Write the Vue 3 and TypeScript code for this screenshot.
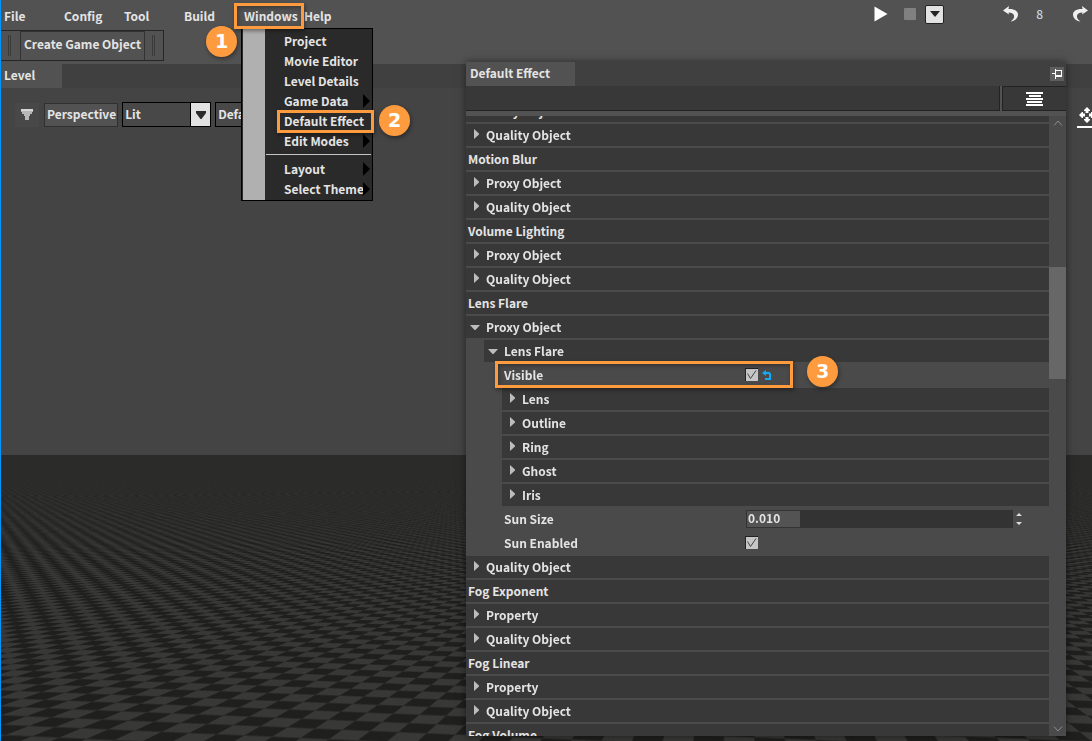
<script setup lang="ts">
import { onBeforeUnmount, onMounted, ref } from 'vue'

interface MenuEntry {
  label: string
  submenu?: boolean
  marked?: boolean
  separated?: boolean
}

interface TreeRow {
  label: string
  depth: number
  kind: 'title' | 'closed' | 'open' | 'check' | 'number'
  marked?: boolean
}

const menus: string[] = ['File', 'Config', 'Tool', 'Build', 'Windows', 'Help']

const windowsMenu: MenuEntry[] = [
  { label: 'Project' },
  { label: 'Movie Editor' },
  { label: 'Level Details' },
  { label: 'Game Data', submenu: true },
  { label: 'Default Effect', marked: true },
  { label: 'Edit Modes', submenu: true },
  { label: 'Layout', submenu: true, separated: true },
  { label: 'Select Theme', submenu: true },
]

const rows: TreeRow[] = [
  { label: 'Proxy Object', depth: 1, kind: 'closed' },
  { label: 'Quality Object', depth: 1, kind: 'closed' },
  { label: 'Motion Blur', depth: 0, kind: 'title' },
  { label: 'Proxy Object', depth: 1, kind: 'closed' },
  { label: 'Quality Object', depth: 1, kind: 'closed' },
  { label: 'Volume Lighting', depth: 0, kind: 'title' },
  { label: 'Proxy Object', depth: 1, kind: 'closed' },
  { label: 'Quality Object', depth: 1, kind: 'closed' },
  { label: 'Lens Flare', depth: 0, kind: 'title' },
  { label: 'Proxy Object', depth: 1, kind: 'open' },
  { label: 'Lens Flare', depth: 2, kind: 'open' },
  { label: 'Visible', depth: 3, kind: 'check', marked: true },
  { label: 'Lens', depth: 3, kind: 'closed' },
  { label: 'Outline', depth: 3, kind: 'closed' },
  { label: 'Ring', depth: 3, kind: 'closed' },
  { label: 'Ghost', depth: 3, kind: 'closed' },
  { label: 'Iris', depth: 3, kind: 'closed' },
  { label: 'Sun Size', depth: 3, kind: 'number' },
  { label: 'Sun Enabled', depth: 3, kind: 'check' },
  { label: 'Quality Object', depth: 1, kind: 'closed' },
  { label: 'Fog Exponent', depth: 0, kind: 'title' },
  { label: 'Property', depth: 1, kind: 'closed' },
  { label: 'Quality Object', depth: 1, kind: 'closed' },
  { label: 'Fog Linear', depth: 0, kind: 'title' },
  { label: 'Property', depth: 1, kind: 'closed' },
  { label: 'Quality Object', depth: 1, kind: 'closed' },
  { label: 'Fog Volume', depth: 0, kind: 'title' },
]

const sunSize = ref('0.010')
const floor = ref<HTMLCanvasElement | null>(null)
let observer: ResizeObserver | undefined

// Checkerboard floor seen in two-point perspective, averaged over sub-samples.
function drawFloor(): void {
  const canvas = floor.value
  const ctx = canvas?.getContext('2d')
  if (!canvas || !ctx) return
  const w = canvas.clientWidth
  const h = canvas.clientHeight
  if (!w || !h) return
  canvas.width = w
  canvas.height = h
  const image = ctx.createImageData(w, h)
  const n = 4
  for (let y = 0; y < h; y++) {
    for (let x = 0; x < w; x++) {
      let sum = 0
      for (let j = 0; j < n; j++) {
        const d = y + (j + 0.5) / n
        for (let i = 0; i < n; i++) {
          const px = x + 1 + (i + 0.5) / n
          const u = (9.35 * (735 - px)) / d - 14.345
          const v = (1.21 * (px + 6100)) / d - 30.32
          const fu = Math.floor(u)
          const fv = Math.floor(v)
          const seam = v - fv < 0.1 || u - fu < 0.03
          sum += seam ? 43 : (fu + fv) & 1 ? 56 : 31
        }
      }
      const fade = Math.min(1, Math.max(0, (y - 12) / 90))
      const g = 43 + (sum / (n * n) - 43) * fade
      const k = (y * w + x) * 4
      image.data[k] = g
      image.data[k + 1] = g
      image.data[k + 2] = g - 1
      image.data[k + 3] = 255
    }
  }
  ctx.putImageData(image, 0, 0)
}

onMounted(() => {
  drawFloor()
  if (floor.value) {
    observer = new ResizeObserver(drawFloor)
    observer.observe(floor.value)
  }
})
onBeforeUnmount(() => observer?.disconnect())
</script>

<template>
  <div class="editor">
    <header class="topbar">
      <nav class="menubar" aria-label="Main menu">
        <div v-for="m in menus" :key="m" class="menu-slot">
          <button type="button" class="menu-button" :class="{ marked: m === 'Windows' }">{{ m }}</button>
          <template v-if="m === 'Windows'">
            <div class="dropdown">
              <div class="gutter"></div>
              <ul class="entries">
                <li v-for="e in windowsMenu" :key="e.label" :class="{ separated: e.separated }">
                  <button type="button" class="entry" :class="{ marked: e.marked }">
                    <span>{{ e.label }}</span>
                    <svg v-if="e.submenu" class="sub" width="7" height="14" viewBox="0 0 7 14"><path d="M0 0L7 7L0 14Z" fill="#000" /></svg>
                    <span v-if="e.marked" class="badge badge-two">2</span>
                  </button>
                </li>
              </ul>
            </div>
            <span class="badge badge-one">1</span>
          </template>
        </div>
      </nav>
      <div class="playback">
        <button type="button" class="icon" aria-label="Play">
          <svg width="14" height="16" viewBox="0 0 14 16"><path d="M0.5 0.5L13.5 8L0.5 15.5Z" fill="#fff" /></svg>
        </button>
        <button type="button" class="icon stop" aria-label="Stop"></button>
        <button type="button" class="icon more" aria-label="Play options">
          <svg width="10" height="6" viewBox="0 0 10 6"><path d="M0 0H10L5 6Z" fill="#222" /></svg>
        </button>
        <button type="button" class="icon undo" aria-label="Undo">
          <svg width="16" height="16" viewBox="0 0 16 16"><path d="M0 4.5L6 0L5.5 3C11 2.5 15 5 15 8.500C15 12 12 15 7.500 15.500C10.500 13.500 11.500 11.500 11 9.500C10.500 7.500 8.500 6.500 5.500 6.500L6 8.500Z" fill="#efefef" /></svg>
        </button>
        <span class="count">8</span>
        <button type="button" class="icon redo" aria-label="Redo">
          <svg width="16" height="16" viewBox="0 0 16 16"><path d="M16 4.500L10 0L10.500 3C5 2.500 1 5 1 8.500C1 12 4 15 8.500 15.500C5.500 13.500 4.500 11.500 5 9.500C5.500 7.500 7.500 6.500 10.500 6.500L10 8.500Z" fill="#efefef" /></svg>
        </button>
      </div>
    </header>

    <div class="toolbar">
      <span class="grip"></span>
      <button type="button" class="create">Create Game Object</button>
      <span class="grip"></span>
    </div>

    <div class="tabs"><button type="button" class="tab level">Level</button></div>

    <main class="viewport">
      <div class="scene">
        <div class="sky"></div>
        <div class="ground"><canvas ref="floor"></canvas></div>
      </div>
      <div class="view-tools">
        <button type="button" class="filter" aria-label="View options">
          <svg width="12" height="11" viewBox="0 0 12 11"><path d="M0 0H12V3H11V5H9V7H8V11H4V7H3V5H1V3H0Z" fill="#b8b8b8" /><path d="M0 0H12V2H0Z" fill="#d6d6d6" /></svg>
        </button>
        <button type="button" class="perspective">Perspective</button>
        <label class="picker">
          <select aria-label="Shading"><option>Lit</option></select>
          <span class="picker-arrow"><svg width="10" height="8" viewBox="0 0 10 8"><path d="M0 0H10V2L5.500 8H4.500L0 2Z" fill="#2b2b2b" /></svg></span>
        </label>
        <label class="picker">
          <select aria-label="Buffer"><option>Default</option></select>
          <span class="picker-arrow"><svg width="10" height="8" viewBox="0 0 10 8"><path d="M0 0H10V2L5.500 8H4.500L0 2Z" fill="#2b2b2b" /></svg></span>
        </label>
        <button type="button" class="move" aria-label="Move">
          <svg width="18" height="16" viewBox="0 0 18 16"><path d="M9 0L12 3V4H10.500V6H7.500V4H6V3ZM9 16L12 13V12H10.500V10H7.500V12H6V13ZM1 8L4 5H5V6.500H7V9.500H5V11H4ZM17 8L14 5H13V6.500H11V9.500H13V11H14Z" fill="#fff" /></svg>
        </button>
      </div>
    </main>

    <section class="panel" aria-label="Default Effect">
      <div class="panel-tabs">
        <button type="button" class="tab effect">Default Effect</button>
        <button type="button" class="pin" aria-label="Pin">
          <svg width="10" height="10" viewBox="0 0 10 10" fill="#fff"><path d="M0 4H3V5H0ZM3 0H4V10H3ZM4 1H10V2H4ZM9 2H10V8H9ZM4 6H9V8H4Z" /></svg>
        </button>
      </div>
      <div class="search">
        <input type="text" aria-label="Search properties" />
        <button type="button" class="listing" aria-label="List options">
          <svg width="17" height="14" viewBox="0 0 17 14" fill="#fff"><path d="M0 0H17V2H0ZM3 3H15V5H3ZM0 6H17V8H0ZM1 9H16V11H1ZM0 12H17V14H0Z" /></svg>
        </button>
      </div>
      <div class="list">
        <div class="rows">
          <div v-for="(r, i) in rows" :key="i" class="row" :class="['d' + r.depth, r.kind]">
            <template v-if="r.kind === 'check' || r.kind === 'number'">
              <label class="name" :for="'field' + i">{{ r.label }}</label>
              <div class="value">
                <span v-if="r.kind === 'check'" class="tick">
                  <input :id="'field' + i" type="checkbox" checked />
                  <svg width="13" height="13" viewBox="0 0 13 13" fill="none" stroke="#444"><path d="M2.500 5.500L5.500 10.500L11 2.500" /></svg>
                </span>
                <button v-if="r.marked" type="button" class="reset" aria-label="Reset to default">
                  <svg width="10" height="11" viewBox="0 0 10 11" fill="none" stroke="#14a9f5" stroke-width="2"><path d="M2 3H7L8 4V9H3" /><path d="M4 0L0 3L4 6Z" fill="#14a9f5" stroke="none" /></svg>
                </button>
                <template v-if="r.kind === 'number'">
                  <input :id="'field' + i" v-model="sunSize" class="number" type="text" />
                  <button type="button" class="spin" aria-label="Step value">
                    <svg width="8" height="14" viewBox="0 0 8 14" fill="#ddd"><path d="M1 4L4 1L7 4ZM1 10L4 13L7 10Z" /></svg>
                  </button>
                </template>
              </div>
              <template v-if="r.marked">
                <span class="frame"></span>
                <span class="badge badge-three">3</span>
              </template>
            </template>
            <button v-else-if="r.kind !== 'title'" type="button" class="toggle">
              <svg v-if="r.kind === 'closed'" width="10" height="12" viewBox="0 0 10 12"><path d="M4 0L9 4.500V5.500L4 10Z" fill="#bcbcbc" /></svg>
              <svg v-else width="10" height="12" viewBox="0 0 10 12"><path d="M0 4H10L5.500 9H4.500Z" fill="#bcbcbc" /></svg>
              <span>{{ r.label }}</span>
            </button>
            <span v-else class="title">{{ r.label }}</span>
          </div>
        </div>
        <div class="scrollbar">
          <svg width="10" height="6" viewBox="0 0 10 6" fill="none" stroke="#8c8c8c"><path d="M1 5.500L5 1L9 5.500" /></svg>
          <div class="track"><div class="thumb"></div></div>
          <svg width="10" height="6" viewBox="0 0 10 6" fill="none" stroke="#8c8c8c"><path d="M1 0.500L5 5L9 0.500" /></svg>
        </div>
      </div>
    </section>
  </div>
</template>

<style>
body {
  margin: 0;
  background: #444;
}
</style>

<style scoped>
.editor,
.editor * {
  box-sizing: border-box;
}
.editor {
  position: relative;
  display: flex;
  flex-direction: column;
  height: 100vh;
  overflow: hidden;
  border-left: 1px solid #0096ff;
  background: #525252;
  color: #e4e4e4;
  font: 700 12px/20px "Noto Sans CJK SC", "Noto Sans", sans-serif;
}
button,
input,
select {
  margin: 0;
  padding: 0;
  border: 0;
  border-radius: 0;
  background: none;
  color: inherit;
  font: inherit;
  appearance: none;
}
svg {
  display: block;
  flex: none;
}

.topbar {
  display: flex;
  justify-content: space-between;
  height: 30px;
  flex: none;
}
.menubar {
  display: flex;
  padding-top: 3px;
}
.menu-slot {
  position: relative;
  width: 60px;
}
.menu-button {
  height: 26px;
  padding: 0 3px;
  white-space: nowrap;
}
.menu-button.marked {
  position: relative;
  z-index: 12;
}
.menu-button.marked::after {
  content: "";
  position: absolute;
  inset: 0 -3px 0 -7px;
  border: 3px solid #ff9b3f;
  box-shadow: 1px 2px 4px rgba(0, 0, 0, 0.4), inset 1px 2px 4px rgba(0, 0, 0, 0.3);
}
.dropdown {
  position: absolute;
  z-index: 10;
  top: 25px;
  left: 0;
  display: flex;
  width: 132px;
  border: 1px solid #000;
  padding-left: 1px;
  background: #2a2a2a;
}
.gutter {
  flex: none;
  width: 22px;
  background: #b0b0b0;
}
.entries {
  flex: 1;
  min-width: 0;
  margin: 0;
  padding: 2px 1px 1px;
  list-style: none;
}
.entries .separated {
  margin-top: 3px;
  padding-top: 4px;
  border-top: 1px solid #c4c4c4;
}
.entry {
  position: relative;
  display: flex;
  align-items: center;
  justify-content: space-between;
  width: 100%;
  height: 20px;
  padding-left: 18px;
  white-space: nowrap;
}
.entry .sub {
  margin-right: 1px;
}
.entry > span:first-child {
  flex: 1;
  min-width: 0;
  text-align: left;
}
.entry.marked::after {
  content: "";
  position: absolute;
  inset: -1px -3px -2px 11px;
  border: 3px solid #ff9b3f;
  box-shadow: 1px 2px 4px rgba(0, 0, 0, 0.4);
}
.badge {
  position: absolute;
  z-index: 20;
  width: 31px;
  height: 31px;
  border-radius: 50%;
  background: #ff9b3f;
  box-shadow: 1px 2px 4px rgba(0, 0, 0, 0.4);
  color: #fff;
  font: 700 19px/31px "DejaVu Sans", sans-serif;
  text-align: center;
}
.badge-one {
  top: 23px;
  left: -35px;
}
.badge-two {
  top: -6px;
  right: -39px;
}
.badge-three {
  top: -8px;
  left: 305px;
}

.playback {
  display: flex;
  align-items: center;
  height: 28px;
  margin-right: -11px;
  padding-right: 15px;
}
.icon {
  display: flex;
  align-items: center;
  justify-content: center;
}
.stop {
  width: 12px;
  height: 12px;
  margin-left: 16px;
  border-radius: 1px;
  background: #808080;
}
.more {
  width: 19px;
  height: 19px;
  margin-left: 9px;
  border: 1px solid #222;
  border-radius: 2px;
  background: #e2e2e2;
}
.undo {
  margin-left: 59px;
}
.count {
  margin: 0 29px 0 17px;
  color: #c8d2dc;
  font-weight: 500;
}

.toolbar {
  display: flex;
  align-items: stretch;
  align-self: flex-start;
  height: 31px;
  flex: none;
  margin-bottom: 3px;
  border: 1px solid #262626;
  border-left: 0;
}
.grip {
  width: 3px;
  margin: 4px 8px 4px 7px;
  border: solid #3a3a3a;
  border-width: 0 1px;
}
.create {
  margin: 0 0 0 1px;
  padding: 0 3px 4px;
  border: 1px solid #333;
  border-width: 1px 1px 0;
}
.tabs {
  height: 24px;
  flex: none;
  background: #404040;
}
.tab {
  height: 24px;
  padding: 0 0 2px 3px;
  background: #525252;
  text-align: left;
}
.level {
  width: 61px;
}

.viewport {
  position: relative;
  flex: 1;
  min-height: 0;
}
.scene {
  position: absolute;
  inset: 0;
  display: flex;
  flex-direction: column;
}
.sky {
  flex: 367;
  background: #444;
}
.ground {
  position: relative;
  flex: 286;
  background: #2b2b2a;
}
.ground canvas {
  position: absolute;
  width: 100%;
  height: 100%;
}
.view-tools {
  position: relative;
  display: flex;
  align-items: center;
  gap: 4px;
  height: 25px;
  margin-top: 14px;
  padding-left: 14px;
}
.filter {
  display: flex;
  align-items: center;
  justify-content: center;
  width: 24px;
  height: 24px;
  background: #484848;
}
.perspective {
  height: 24px;
  margin-left: 1px;
  padding: 0 1px 3px 2px;
  border: 1px solid #303030;
  background: #525252;
}
.picker {
  display: flex;
  width: 89px;
  height: 25px;
  border: 1px solid #000;
  background: #484848;
}
.picker select {
  flex: 1;
  min-width: 0;
  padding: 0 0 1px 2px;
}
.picker-arrow {
  display: flex;
  align-items: center;
  justify-content: center;
  width: 20px;
  border-left: 1px solid #000;
  background: #e2e2e2;
}
.move {
  height: 26px;
  margin: 0 -5px 0 auto;
  padding: 3px 1px 0;
  border-bottom: 2px solid #fff;
}

.panel {
  position: absolute;
  z-index: 5;
  top: 62px;
  right: 26px;
  bottom: 5px;
  left: 465px;
  display: flex;
  flex-direction: column;
  background: #4a4a4a;
  box-shadow: 0 0 8px rgba(0, 0, 0, 0.5);
}
.panel-tabs {
  display: flex;
  justify-content: space-between;
  flex: none;
  height: 24px;
  background: #404040;
}
.effect {
  width: 109px;
  padding-left: 4px;
}
.pin {
  display: flex;
  align-items: center;
  justify-content: center;
  width: 14px;
  height: 14px;
  margin: 5px 2px;
  background: #5e5e5e;
}
.search {
  display: flex;
  flex: none;
  gap: 2px;
  height: 30px;
  border-bottom: 5px solid #525252;
  background: #525252;
}
.search input {
  flex: 1;
  min-width: 0;
  border: solid #222;
  border-width: 0 1px 1px 0;
  background: #383838;
}
.listing {
  display: flex;
  align-items: center;
  justify-content: center;
  width: 64px;
  border: solid #222;
  border-width: 1px 0 1px 1px;
  background: #383838;
}
.list {
  display: flex;
  flex: 1;
  min-height: 0;
  overflow: hidden;
}
.rows {
  flex: 1;
  margin-top: -16px;
}
.row {
  position: relative;
  display: flex;
  align-items: center;
  height: 22px;
  margin-bottom: 2px;
  background: #383838;
}
.row.d2 {
  margin-left: 18px;
}
.row.d3 {
  margin-left: 36px;
}
.row.check,
.row.number {
  background: none;
}
.title {
  padding-left: 1px;
}
.name {
  flex: 1;
  padding-left: 2px;
}
.toggle {
  display: flex;
  align-items: center;
  gap: 6px;
  width: 100%;
  height: 22px;
  padding-left: 4px;
}
.value {
  display: flex;
  align-items: center;
  width: 304px;
  height: 18px;
}
.tick {
  display: grid;
  height: 14px;
}
.tick > * {
  grid-area: 1 / 1;
}
.tick input {
  width: 13px;
  height: 13px;
  border: 1px solid #222;
  border-width: 1px 0 0 1px;
  background: #c6c6c6;
}
.tick svg {
  pointer-events: none;
}
.reset {
  margin-left: 4px;
}
.value .number {
  flex: 1;
  min-width: 0;
  height: 18px;
  margin-left: 1px;
  padding: 0 0 2px 1px;
  border: 1px solid #333;
  background: linear-gradient(to right, #535353 20%, #333 20%);
}
.spin {
  margin: 0 26px 0 2px;
}
.frame {
  position: absolute;
  z-index: 2;
  top: -3px;
  left: -7px;
  width: 298px;
  height: 27px;
  border: 3px solid #ff9b3f;
  box-shadow: 1px 2px 4px rgba(0, 0, 0, 0.4), inset 1px 2px 4px rgba(0, 0, 0, 0.3);
  pointer-events: none;
}
.scrollbar {
  display: flex;
  flex-direction: column;
  align-items: center;
  width: 17px;
  padding: 4px 0 4px;
  background: #4a4a4a;
}
.track {
  flex: 1;
  width: 100%;
  margin: 6px 0;
}
.track::before {
  content: "";
  display: block;
  height: 23%;
}
.thumb {
  height: 19%;
  background: #676767;
}
</style>
